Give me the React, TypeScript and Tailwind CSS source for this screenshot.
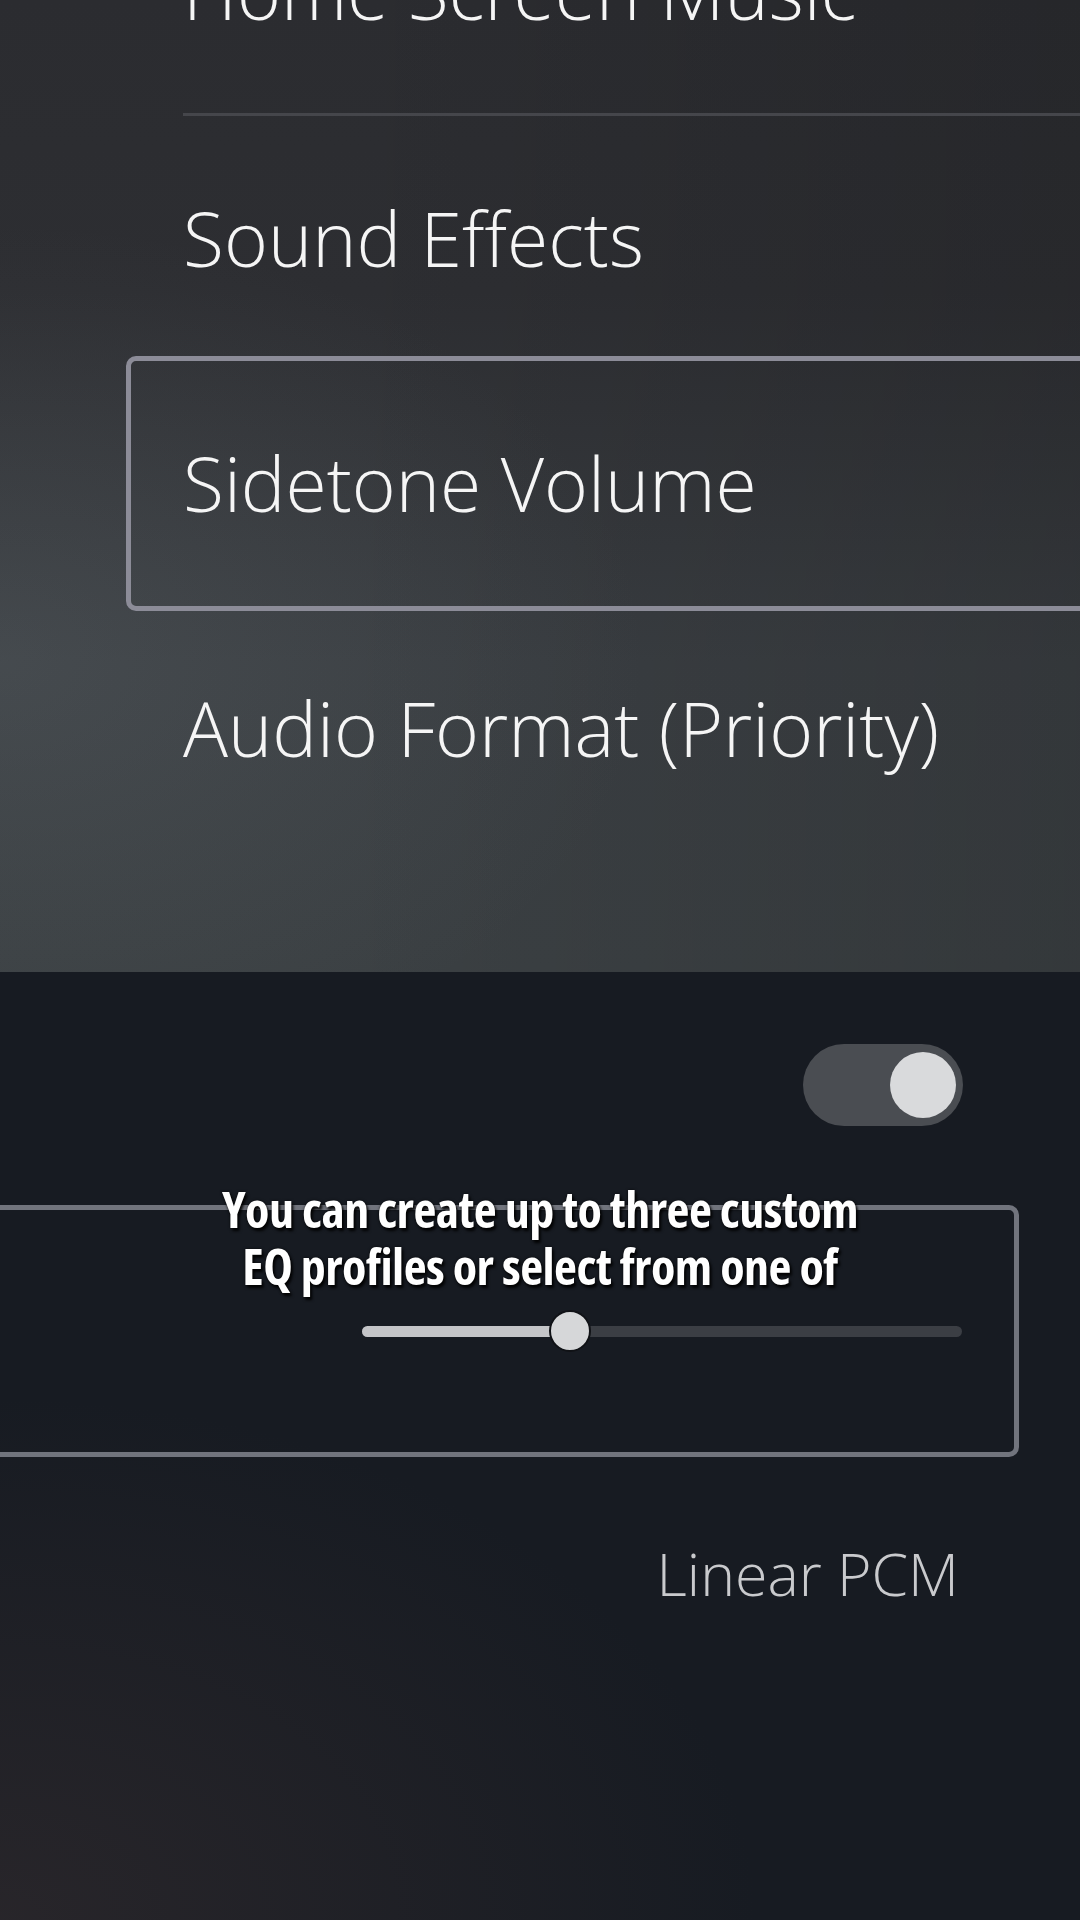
import React from 'react';

const menuFont = {fontFamily: '"Open Sans", "Noto Sans", sans-serif'};

type Row = {label: string; focused?: boolean; divider?: boolean};

const settings: Row[] = [
    {label: 'Home Screen Music', divider: true},
    {label: 'Sound Effects'},
    {label: 'Sidetone Volume', focused: true},
    {label: 'Audio Format (Priority)'},
];

function MenuRow({label, focused, divider}: Row) {
    if (focused) {
        return (
            <div className="-my-[5px] ml-[126px] mr-[-40px] flex h-[255px] items-center rounded-[10px] border-[5px] border-[#8c8c98] pl-[52px]">
                <span className="text-[75px] font-light leading-none text-[#f5f5f5]">{label}</span>
            </div>
        );
    }
    return (
        <div className="flex h-[245.5px] items-center pl-[183px]">
            <div className={`flex h-full w-full items-center ${divider ? 'border-b-[3px] border-[#45464b]' : ''}`}>
                <span className="text-[75px] font-light leading-none text-[#f5f5f5]">{label}</span>
            </div>
        </div>
    );
}

function Toggle({on}: {on: boolean}) {
    return (
        <div className={`flex h-[82px] w-[160px] items-center rounded-full bg-[#4a4d52] px-[7px] ${on ? 'justify-end' : 'justify-start'}`}>
            <div className="size-[66px] rounded-full bg-[#d9dadc]"/>
        </div>
    );
}

function Slider({value}: {value: number}) {
    return (
        <div className="relative flex h-[44px] w-[600px] items-center">
            <div className="h-[11px] w-full overflow-hidden rounded-full bg-[#3b3e44]">
                <div className="h-full bg-[#c4c5c8]" style={{width: `${value * 100}%`}}/>
            </div>
            <div
                className="absolute top-1/2 size-[42px] -translate-x-1/2 -translate-y-1/2 rounded-full border-2 border-[#101216] bg-[#d6d7d9]"
                style={{left: `${value * 100}%`}}
            />
        </div>
    );
}

export default function App() {
    return (
        <div className="flex h-[1920px] w-[1080px] flex-col overflow-hidden" style={menuFont}>
            {/* settings list */}
            <section className="relative h-[972px] shrink-0 overflow-hidden bg-[linear-gradient(180deg,#2b2c30_0%,#2d2e32_30%,#3a3e42_68%,#3b4043_100%)]">
                <div className="pointer-events-none absolute inset-0 bg-[radial-gradient(ellipse_60%_45%_at_0%_68%,rgba(120,130,135,0.18),transparent_100%)]"/>
                <div className="pointer-events-none absolute inset-0 bg-[linear-gradient(90deg,rgba(0,0,0,0)_30%,rgba(0,0,0,0.12)_100%)]"/>
                <div className="relative -mt-[130px] flex flex-col">
                    {settings.map((row) => (
                        <MenuRow key={row.label} {...row}/>
                    ))}
                </div>
            </section>

            {/* value panel */}
            <section className="relative flex-1 overflow-hidden bg-[#171b22]">
                <div className="pointer-events-none absolute inset-0 bg-[radial-gradient(ellipse_70%_55%_at_0%_100%,rgba(44,40,44,0.8),transparent_100%)]"/>
                <div className="relative -mt-[10px] flex flex-col">
                    <div className="flex h-[246px] items-center justify-end pr-[117px]">
                        <Toggle on/>
                    </div>
                    <div className="-my-[3px] ml-[-40px] mr-[61px] flex h-[252px] items-center justify-end rounded-[10px] border-[5px] border-[#71747d] pr-[52px]">
                        <Slider value={0.347}/>
                    </div>
                    <div className="flex h-[246px] items-center justify-end pr-[121px]">
                        <span className="-mt-[8px] text-[59px] font-light leading-none text-[#c9cacd]">Linear PCM</span>
                    </div>
                </div>

                {/* caption overlay */}
                <div
                    className="absolute left-0 right-0 top-[209px] text-center text-[50px] font-bold leading-[57px] tracking-[-0.5px] text-white [font-stretch:75%] [text-shadow:2px_3px_3px_rgba(0,0,0,0.9),0_0_3px_rgba(0,0,0,0.7)]"
                    style={{fontFamily: '"Open Sans", sans-serif'}}
                >
                    <div>You can create up to three custom</div>
                    <div>EQ profiles or select from one of</div>
                </div>
            </section>
        </div>
    );
}
